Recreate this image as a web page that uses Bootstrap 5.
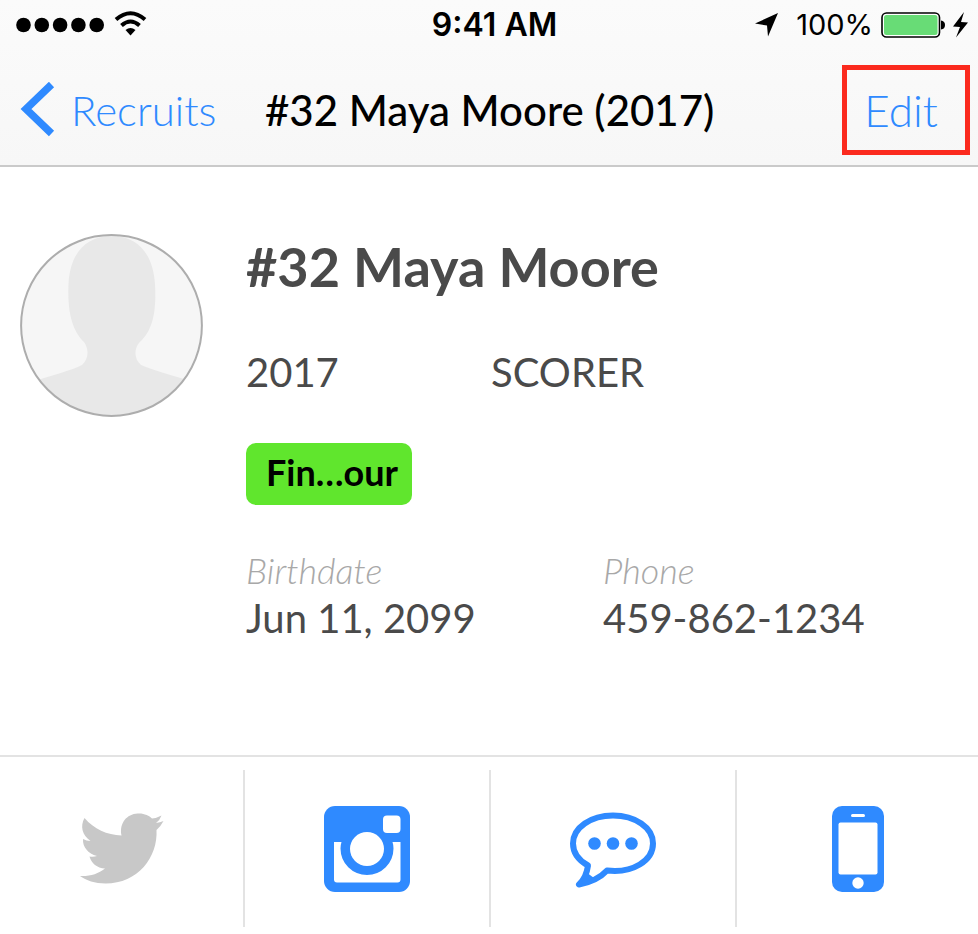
<!DOCTYPE html>
<html lang="en">
<head>
<meta charset="utf-8">
<meta name="viewport" content="width=device-width, initial-scale=1">
<title>#32 Maya Moore</title>
<link href="https://cdn.jsdelivr.net/npm/bootstrap@5.3.0/dist/css/bootstrap.min.css" rel="stylesheet">
<style>
  :root { --accent: #2f8aff; --ink: #4a4a4a; }
  body { font-family: Lato, "Open Sans", sans-serif; color: var(--ink); }
  svg { display: block; flex: none; }
  .top-area { background: linear-gradient(#fbfbfb, #f7f7f7); border-bottom: 2px solid #cacaca; color: #000; }
  .split { display: grid; grid-template-columns: 1fr auto 1fr; align-items: center; }
  .status { height: 50px; padding: 0 9px 0 16px; font-family: Inter, sans-serif; font-size: 29px; line-height: 48px; }
  .clock { font-weight: 600; font-size: 32px; padding-left: 4px; }
  .title-bar { height: 115px; padding: 4px 8px 0 20px; grid-template-columns: 196px 1fr 128px; column-gap: 49px; }
  .back-link { color: var(--accent); font-size: 42px; line-height: 56px; font-weight: 300; gap: 16px; }
  .screen-title { font-size: 42px; line-height: 48px; font-weight: 500; white-space: nowrap; }
  .edit-btn { height: 90px; padding: 0 10px 0 0; border: 5px solid #fb2a1e; color: var(--accent); font-size: 44px; font-weight: 300; line-height: 48px; }
  .profile { padding: 67px 20px 36px; gap: 43px; }
  .avatar { width: 183px; height: 183px; }
  .player-name { font-size: 54px; line-height: 66px; font-weight: 700; }
  .fact { font-size: 40px; line-height: 48px; }
  .facts { display: grid; grid-template-columns: 245px 1fr; margin-top: 48px; }
  .contact { display: grid; grid-template-columns: 357px 1fr; margin-top: 41px; }
  .contact dt { font-size: 36px; line-height: 48px; font-weight: 300; font-style: italic; color: #a8a8a8; }
  .stage { display: inline-block; margin-top: 47px; padding: 0 14px 4px 20px; border-radius: 10px; background: #60e62d; color: #000; font-size: 36px; line-height: 58px; font-weight: 700; }
  .actions { display: grid; grid-template-columns: 245fr 246fr 246fr 241fr; padding: 13px 0 7px; border-top: 2px solid #e3e3e3; }
  .action { height: 157px; color: var(--accent); border: 0; border-right: 2px solid #e3e3e3; background: none; }
  .action:last-child { border-right: 0; }
  .action.unset { color: #c8c8c8; }
</style>
<script src="https://cdn.jsdelivr.net/npm/bootstrap@5.3.0/dist/js/bootstrap.bundle.min.js"></script>
</head>
<body class="bg-white">
<div class="d-flex flex-column min-vh-100">
  <header class="top-area">
    <div class="status split">
      <div class="d-flex align-items-center">
        <svg width="132" height="28" viewBox="0 0 132 28" role="img" aria-label="Signal and Wi-Fi">
          <circle cx="7.5" cy="14" r="7.3"/><circle cx="25.8" cy="14" r="7.3"/><circle cx="44.1" cy="14" r="7.3"/><circle cx="62.4" cy="14" r="7.3"/><circle cx="80.7" cy="14" r="7.3"/>
          <path d="M100 8.500Q114.500-4 129 8.500M105.500 14.500Q114.500 6.500 123.500 14.500" fill="none" stroke="#000" stroke-width="4"/>
          <path d="M109.500 19Q114.500 15 119.500 19L114.500 24.500Z"/>
        </svg>
      </div>
      <div class="clock">9:41 AM</div>
      <div class="d-flex align-items-center justify-content-end">
        <svg class="me-3" width="25" height="26" viewBox="0 0 25 26" aria-hidden="true"><path d="M23 1L13 24.500L12 13.500L0 11.500Z"/></svg>
        <span class="me-2">100%</span>
        <svg width="88" height="28" viewBox="0 0 88 28" role="img" aria-label="Battery charging">
          <rect x="1" y="2" width="57.500" height="24" rx="4.500" fill="#fff" stroke="#000" stroke-width="1.600"/>
          <rect x="3" y="4" width="53.500" height="20" rx="2.500" fill="#68dc76"/>
          <path d="M60 9.500Q64 10 64 14T60 18.500Z"/>
          <path d="M83 1L72 15.500L79 16L75 26.500L87 11.500L80 11Z"/>
        </svg>
      </div>
    </div>
    <nav class="title-bar split" aria-label="Recruit">
      <a class="back-link d-flex align-items-center text-decoration-none" href="#recruits">
        <svg width="35" height="56" viewBox="0 0 35 56" aria-hidden="true"><path d="M31.500 2.500L6 27L31.500 51.500" fill="none" stroke="currentColor" stroke-width="7.500"/></svg>
        Recruits
      </a>
      <h1 class="screen-title m-0">#32 Maya Moore (2017)</h1>
      <button class="edit-btn bg-transparent" type="button">Edit</button>
    </nav>
  </header>

  <main class="profile d-flex flex-grow-1 align-items-start">
    <svg class="avatar" viewBox="0 0 183 183" role="img" aria-label="No photo">
      <defs><clipPath id="disc"><circle cx="91.500" cy="91.500" r="90"/></clipPath></defs>
      <circle cx="91.500" cy="91.500" r="90" fill="#f6f6f6"/>
      <path clip-path="url(#disc)" fill="#e8e8e8" d="M92 2C65 2 50 20 48.500 50C47 84 55 99 64 108C69 115 69 125 62 131C50 137 32 141 18 146L-4 190H190L164 145C148 140 132 136 121 131C114 125 114 115 119 109C130 99 137 84 135 50C133 20 118 2 92 2Z"/>
      <circle cx="91.500" cy="91.500" r="90.400" fill="none" stroke="#adadad" stroke-width="2"/>
    </svg>
    <div class="flex-grow-1">
      <h2 class="player-name m-0">#32 Maya Moore</h2>
      <div class="facts fact"><span>2017</span><span>SCORER</span></div>
      <span class="stage">Fin…our</span>
      <dl class="contact mb-0">
        <div><dt>Birthdate</dt><dd class="fact m-0">Jun 11, 2099</dd></div>
        <div><dt>Phone</dt><dd class="fact m-0">459-862-1234</dd></div>
      </dl>
    </div>
  </main>

  <footer class="actions">
    <button class="action unset d-flex align-items-center justify-content-center p-0" type="button" aria-label="Twitter">
      <svg width="86" height="86" viewBox="0 0 86 86" fill="currentColor"><path d="M5.500 12C15 23 28 29 42.500 29.500C40 17 48 8 58.500 7.500C65 7 70 9.500 73 12.500Q78 12 82.500 9.500Q81 14 77 17Q81 16.500 84.500 15Q82 20 77.500 24C79 51 59 77.500 26.500 77.500C16 77.500 7 74.500 1 70C11 70.500 19 68 26 62.500C18 62 12.500 57.500 10.500 50.500Q14.500 51.200 18 50C9 47.500 3.500 41 4 33Q7.500 35 11.500 35C3 29 1 20 5.500 12Z"/></svg>
    </button>
    <button class="action d-flex align-items-center justify-content-center p-0" type="button" aria-label="Instagram">
      <svg width="88" height="88" viewBox="0 0 88 88"><rect x="1" y="1" width="86" height="86" rx="11" fill="currentColor"/><path d="M11 37H18.500Q17.500 40 17.500 43.500A26.500 26.500 0 0 0 70.500 43.500Q70.500 40 69.500 37H77.500V74.500Q77.500 77.500 74.500 77.500H14Q11 77.500 11 74.500Z" fill="#fff"/><circle cx="44" cy="44" r="17" fill="#fff"/><rect x="60" y="10.500" width="17.500" height="17.500" rx="4" fill="#fff"/></svg>
    </button>
    <button class="action d-flex align-items-center justify-content-center p-0" type="button" aria-label="Message">
      <svg width="88" height="88" viewBox="0 0 88 88"><path d="M44 10.500C22 10.500 4 22.500 4 38.500C4 47 9 55 19 60.500C18 68 15 75 10 79.500C21 77.500 31 73 38 65.500C64 68.500 84 55.500 84 38.500C84 22.500 66 10.500 44 10.500Z" fill="none" stroke="currentColor" stroke-width="6" stroke-linejoin="round"/><path d="M17 67L12 79L25 73Z" fill="currentColor"/><g fill="currentColor"><circle cx="25.500" cy="38.500" r="6.300"/><circle cx="44" cy="38.500" r="6.300"/><circle cx="62.500" cy="38.500" r="6.300"/></g></svg>
    </button>
    <button class="action d-flex align-items-center justify-content-center p-0" type="button" aria-label="Phone">
      <svg width="52" height="88" viewBox="0 0 52 88"><rect y="1" width="52" height="86" rx="10" fill="currentColor"/><rect x="6.500" y="17.500" width="39" height="52" rx="2" fill="#fff"/><rect x="19" y="9" width="14" height="3" rx="1.500" fill="#fff"/><circle cx="26" cy="78" r="5.700" fill="#fff"/></svg>
    </button>
  </footer>
</div>
</body>
</html>
